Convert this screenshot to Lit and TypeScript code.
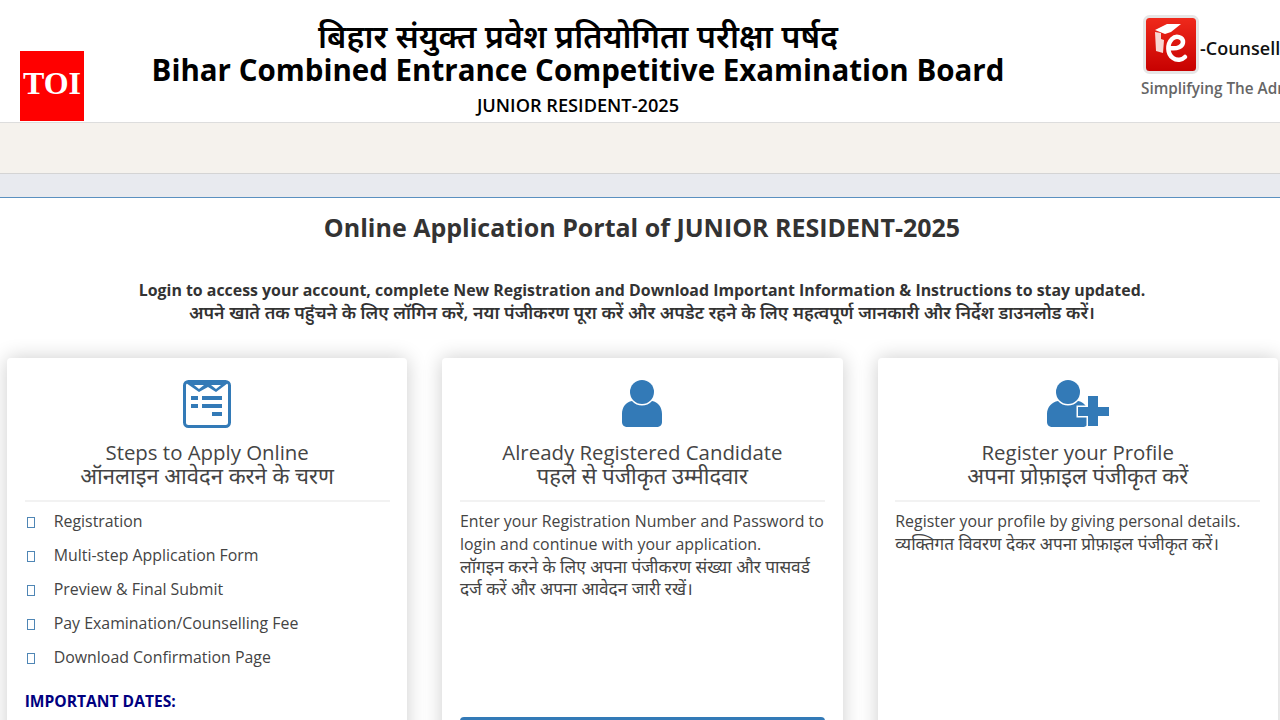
import { LitElement, html, css, svg } from "lit";
import { customElement } from "lit/decorators.js";

const steps = [
  "Registration",
  "Multi-step Application Form",
  "Preview & Final Submit",
  "Pay Examination/Counselling Fee",
  "Download Confirmation Page",
];

const formIcon = svg`<svg width="48" height="48" viewBox="0 0 48 48">
  <rect x="1.5" y="1.5" width="45" height="45" rx="4" fill="#fff" stroke="#337ab7" stroke-width="3"/>
  <path d="M3 3h42L33 12l-8-5-9 5z" fill="#337ab7"/>
  <path d="M11 5h10l-5 4zM28 5h10l-5 4z" fill="#fff"/>
  <path d="M8 16h7v4H8zM19 16h20v4H19zM8 24h7v4H8zM19 24h20v4H19zM29 32h10v4H29z" fill="#337ab7"/>
</svg>`;

const userIcon = svg`<svg width="40" height="48" viewBox="0 0 40 48">
  <circle cx="20" cy="12" r="12" fill="#337ab7"/>
  <path d="M10 21c5 6 15 6 20 0 6 1 10 6 10 13v8c0 3-2 5-6 5H6c-4 0-6-2-6-5v-8c0-7 4-12 10-13z" fill="#337ab7"/>
</svg>`;

const addIcon = svg`<svg width="64" height="48" viewBox="0 0 64 48">
  <circle cx="22" cy="12" r="12" fill="#337ab7"/>
  <path d="M12 21c5 6 15 6 20 0 6 1 10 6 10 13v8c0 3-2 5-6 5H7c-4 0-6-2-6-5v-8c0-7 5-12 11-13z" fill="#337ab7"/>
  <path d="M42 16h10v11h11v9H52v10H42V36H32v-9h10z" fill="#337ab7" stroke="#fff" stroke-width="3" paint-order="stroke"/>
</svg>`;

const eLogo = svg`<svg class="elogo" width="56" height="59" viewBox="0 0 56 59">
  <defs><linearGradient id="eg" x1="0" y1="0" x2="0" y2="1">
    <stop offset="0" stop-color="#f02a1c"/><stop offset="1" stop-color="#c60000"/>
  </linearGradient></defs>
  <rect x="1.5" y="1.5" width="53" height="56" rx="5" fill="url(#eg)" stroke="#e6e6e6" stroke-width="3"/>
  <path d="M12 15l12-6h14l-10 8-6 2z" fill="#fff"/>
  <path d="M12 17l6 1v6l3 1-1 13-7-2z" fill="#f7d6d2"/>
  <path d="M27 33c7 1 13-1 13-6 0-5-7-7-11-3-5 5-5 15 1 19 4 3 9 2 12-1" fill="none" stroke="#fff" stroke-width="4.5" stroke-linecap="round"/>
</svg>`;

@customElement("app-root")
export class AppRoot extends LitElement {
  static styles = css`
    :host {
      display: block;
      position: relative;
      width: 1280px;
      height: 720px;
      overflow: hidden;
      background: #fff;
      font-family: "Open Sans", "Noto Sans", sans-serif;
      color: #333;
    }
    .top {
      height: 122px;
      display: flex;
      justify-content: space-between;
      box-sizing: border-box;
      overflow: hidden;
    }
    .titles {
      width: 1156px;
      text-align: center;
      color: #000;
      padding-top: 16px;
    }
    .hi-title {
      font-size: 32.3px;
      line-height: 38px;
      font-weight: 600;
    }
    .en-title {
      font-size: 29.5px;
      line-height: 32px;
      font-weight: 700;
    }
    .sub {
      font-size: 18.2px;
      line-height: 24px;
      font-weight: 600;
      margin-top: 7px;
    }
    .brand {
      flex: 1;
      min-width: 0;
      padding-top: 15px;
      white-space: nowrap;
      margin-left: -15px;
    }
    .brand-row {
      display: flex;
      align-items: center;
      font-size: 18px;
      font-weight: 600;
      color: #111;
    }
    .elogo {
      flex: none;
      margin: 0 1px 0 2px;
    }
    .brand-row span {
      padding-top: 6px;
    }
    .tag {
      font-size: 15.3px;
      line-height: 22px;
      font-weight: 600;
      color: #666;
      margin-top: 3px;
    }
    .toi {
      position: absolute;
      left: 20px;
      top: 51px;
      width: 64px;
      height: 70px;
      background: #f00;
      color: #fff;
      font-family: "Liberation Serif", serif;
      font-weight: 700;
      font-size: 32px;
      line-height: 64px;
      text-align: center;
    }
    .band {
      height: 50px;
      background: #f5f2ed;
      border-top: 1px solid #ddd;
      border-bottom: 1px solid #d4d4d4;
    }
    .strip {
      height: 23px;
      background: #e8eaef;
      border-bottom: 1px solid #5a90c0;
    }
    h1 {
      margin: 0;
      padding: 12px 0 0 4px;
      font-size: 25px;
      line-height: 34px;
      font-weight: 700;
      text-align: center;
      color: #333;
    }
    .intro {
      margin-top: 35px;
      padding-left: 4px;
      text-align: center;
      font-size: 15.9px;
      line-height: 22px;
      font-weight: 700;
      color: #333;
    }
    .intro .hi {
      font-size: 17.75px;
      font-weight: 600;
    }
    .cards {
      display: grid;
      grid-template-columns: repeat(3, 400.3px);
      column-gap: 35px;
      padding-left: 7px;
      margin-top: 34px;
    }
    .card {
      height: 420px;
      box-sizing: border-box;
      padding: 22px 17.7px 0;
      border-radius: 4px;
      background: #fff;
      box-shadow: 0 0 20px rgba(0, 0, 0, 0.2);
      font-size: 15.9px;
      line-height: 22.8px;
      color: #444;
    }
    .icon {
      height: 48px;
      display: flex;
      justify-content: center;
    }
    .head {
      margin-top: 13px;
      padding-bottom: 12px;
      border-bottom: 2px solid #f2f2f2;
      text-align: center;
      font-size: 20.4px;
      line-height: 23px;
      color: #444;
    }
    .head .hi {
      font-size: 22px;
    }
    .steps {
      list-style: none;
      margin: 2px 0 0;
      padding: 0;
    }
    .steps li {
      display: flex;
      align-items: center;
      height: 34px;
    }
    .box {
      width: 6px;
      height: 9px;
      margin: 2px 19px 0 2px;
      border: 1px solid #4f86b5;
    }
    .dates {
      margin-top: 16px;
      font-size: 15.6px;
      font-weight: 700;
      color: #000080;
    }
    .body {
      margin-top: 8px;
    }
    .body p {
      margin: 0;
    }
    .body .hi {
      font-size: 17.2px;
    }
    .btn {
      height: 40px;
      margin-top: 116px;
      border-radius: 4px;
      background: #337ab7;
    }
  `;

  render() {
    return html`
      <div class="top">
        <div class="titles">
          <div class="hi-title">बिहार संयुक्त प्रवेश प्रतियोगिता परीक्षा पर्षद</div>
          <div class="en-title">Bihar Combined Entrance Competitive Examination Board</div>
          <div class="sub">JUNIOR RESIDENT-2025</div>
        </div>
        <div class="brand">
          <div class="brand-row">${eLogo}<span>-Counselling</span></div>
          <div class="tag">Simplifying The Admission</div>
        </div>
      </div>
      <div class="toi">TOI</div>
      <div class="band"></div>
      <div class="strip"></div>
      <h1>Online Application Portal of JUNIOR RESIDENT-2025</h1>
      <div class="intro">
        Login to access your account, complete New Registration and Download Important Information &amp; Instructions to stay updated.<br />
        <span class="hi">अपने खाते तक पहुंचने के लिए लॉगिन करें, नया पंजीकरण पूरा करें और अपडेट रहने के लिए महत्वपूर्ण जानकारी और निर्देश डाउनलोड करें।</span>
      </div>
      <div class="cards">
        <section class="card">
          <div class="icon">${formIcon}</div>
          <div class="head">Steps to Apply Online<br /><span class="hi">ऑनलाइन आवेदन करने के चरण</span></div>
          <ul class="steps">
            ${steps.map((s) => html`<li><span class="box"></span>${s}</li>`)}
          </ul>
          <div class="dates">IMPORTANT DATES:</div>
        </section>
        <section class="card">
          <div class="icon">${userIcon}</div>
          <div class="head">Already Registered Candidate<br /><span class="hi">पहले से पंजीकृत उम्मीदवार</span></div>
          <div class="body">
            <p>Enter your Registration Number and Password to login and continue with your application.</p>
            <p class="hi">लॉगइन करने के लिए अपना पंजीकरण संख्या और पासवर्ड दर्ज करें और अपना आवेदन जारी रखें।</p>
          </div>
          <div class="btn"></div>
        </section>
        <section class="card">
          <div class="icon">${addIcon}</div>
          <div class="head">Register your Profile<br /><span class="hi">अपना प्रोफ़ाइल पंजीकृत करें</span></div>
          <div class="body">
            <p>Register your profile by giving personal details.</p>
            <p class="hi">व्यक्तिगत विवरण देकर अपना प्रोफ़ाइल पंजीकृत करें।</p>
          </div>
        </section>
      </div>
    `;
  }
}
